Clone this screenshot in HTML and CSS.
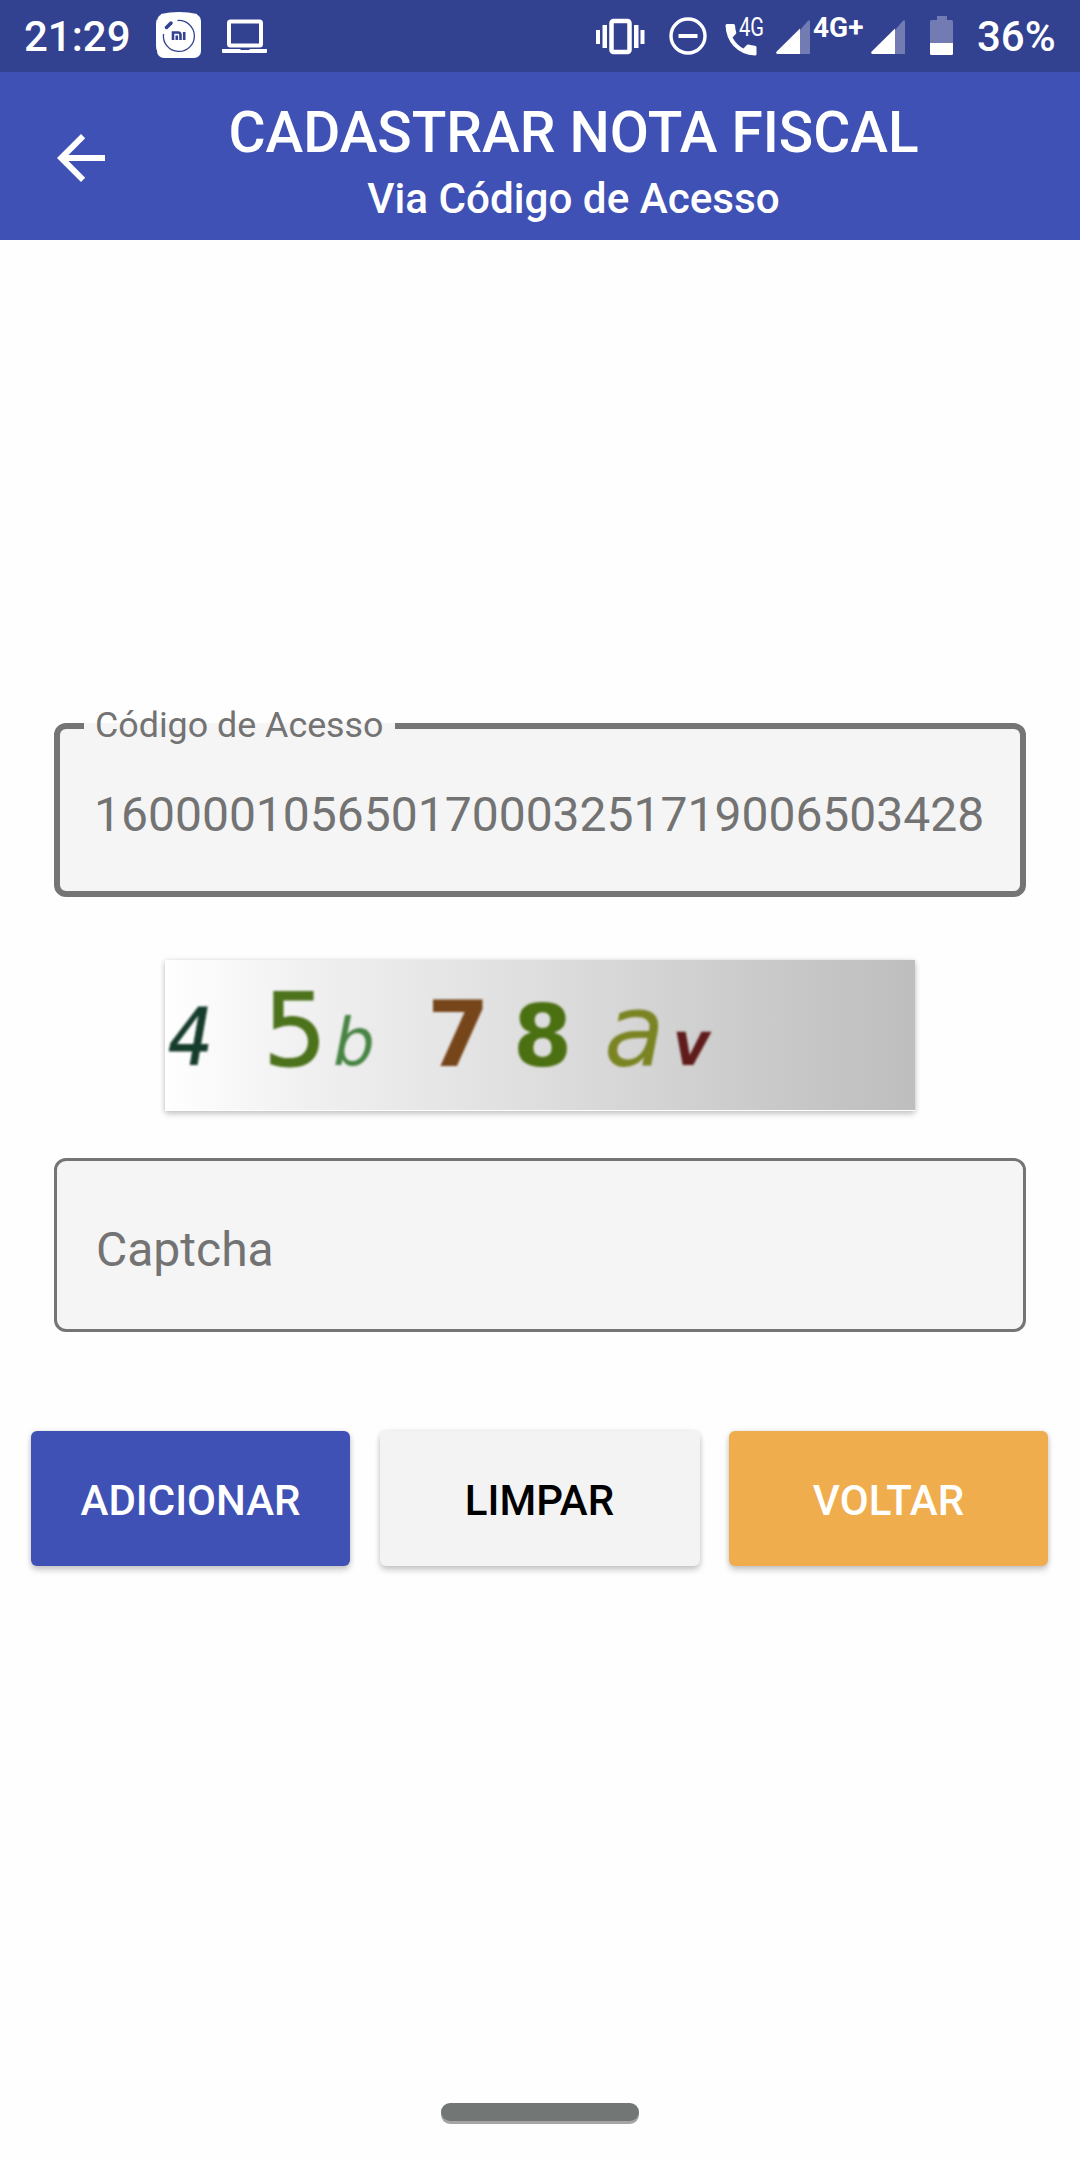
FILE: index.html
```html
<!DOCTYPE html>
<html lang="pt-BR">
<head>
<meta charset="utf-8">
<title>Cadastrar Nota Fiscal</title>
<link rel="stylesheet" href="styles.css">
</head>
<body>
<div class="status">
  <span class="clock">21:29</span>
  <svg class="ico-mi" width="46" height="48" viewBox="0 0 46 48">
    <rect x="1" y="2" width="44" height="44" rx="7" fill="#fff"/>
    <path d="M5 3Q23-1 41 3M1.500 8Q-.5 22 1.500 38" fill="none" stroke="#fff" stroke-width="2"/>
    <path d="M21.500 8.500A15.500 15.500 0 1 1 7.500 22" fill="none" stroke="#334191" stroke-width="1.300"/>
    <path d="M10.500 15.500L15 11" stroke="#334191" stroke-width="3.500" stroke-linecap="round"/>
    <path d="M17 28V20.500H22Q24.500 20.500 24.500 23V28M20.800 23.500V28M28.200 20V28" fill="none" stroke="#334191" stroke-width="2.600"/>
  </svg>
  <svg class="ico-laptop" width="46" height="36" viewBox="0 0 46 36">
    <rect x="7" y="2.500" width="32" height="24" rx="1.500" fill="none" stroke="#fff" stroke-width="4"/>
    <path d="M0 30H18.500V31H27.500V30H45V33Q45 34 44 34H1Q0 34 0 33Z" fill="#fff"/>
  </svg>
  <span class="spacer"></span>
  <svg class="ico-vibrate" width="50" height="38" viewBox="0 0 50 38">
    <path d="M0 12H4V26H0ZM6.500 7H11V30H6.500ZM38 7H42.500V30H38ZM44.500 12H48.500V26H44.500Z" fill="#fff"/>
    <rect x="15.500" y="3" width="18" height="31" rx="2" fill="none" stroke="#fff" stroke-width="4.500"/>
  </svg>
  <svg class="ico-dnd" width="38" height="38" viewBox="0 0 38 38">
    <circle cx="19" cy="19" r="17" fill="none" stroke="#fff" stroke-width="3.400"/>
    <path d="M9.500 19H28.500" stroke="#fff" stroke-width="4"/>
  </svg>
  <svg class="ico-call" width="40" height="40" viewBox="0 -2 40 40">
    <path d="M2 6H8.500Q10 6 10 7.500Q10.200 11.500 11.200 14.300Q11.500 15.300 10.800 16L7.500 19.500Q11.500 27 18.500 30.500L21.800 27Q22.500 26.200 23.500 26.600Q26.500 27.500 30 27.800Q31.500 27.800 31.500 29.300V36Q31.500 37.500 30 37.500Q17 37 8.500 28Q1 19.500 .5 7.500Q.5 6 2 6Z" fill="#fff"/>
    <text x="14" y="18" class="call-net" textLength="25" lengthAdjust="spacingAndGlyphs">4G</text>
  </svg>
  <svg class="ico-signal" width="34" height="34" viewBox="0 0 34 34">
    <path d="M24 10L32 .7Q34-.8 34 2V34H24Z" fill="#727cb3"/>
    <path d="M24 8.500V34H1.500Q-.8 33.500 .7 31.500Z" fill="#fff"/>
  </svg>
  <span class="net">4G+</span>
  <svg class="ico-signal" width="34" height="34" viewBox="0 0 34 34">
    <path d="M24 10L32 .7Q34-.8 34 2V34H24Z" fill="#727cb3"/>
    <path d="M24 8.500V34H1.500Q-.8 33.500 .7 31.500Z" fill="#fff"/>
  </svg>
  <svg class="ico-battery" width="23" height="39" viewBox="0 0 23 39">
    <path d="M7 0H17V4H21.500Q23 4 23 6V27H0V6Q0 4 1.500 4H7Z" fill="#727cb3"/>
    <path d="M0 27H23V37.500Q23 39 21.500 39H1.500Q0 39 0 37.500Z" fill="#fff"/>
  </svg>
  <span class="percent">36%</span>
</div>
<header class="toolbar">
  <svg class="back" width="48" height="48" viewBox="0 0 48 48">
    <path d="M48 21H11.500L28.200 4.200L24 0L0 24L24 48L28.200 43.800L11.500 27H48Z" fill="#fff"/>
  </svg>
  <div class="titles">
    <h1 class="title">CADASTRAR NOTA FISCAL</h1>
    <p class="subtitle">Via Código de Acesso</p>
  </div>
</header>
<main class="form">
  <div class="field field-active">
    <span class="label">Código de Acesso</span>
    <span class="value">160000105650170003251719006503428</span>
  </div>
  <div class="captcha">
    <svg width="750" height="150" viewBox="0 0 750 150">
      <g class="glyphs">
        <text x="3" y="105" font-size="79" font-style="italic" fill="#163c2c" stroke="#163c2c" stroke-width="1" textLength="45" lengthAdjust="spacingAndGlyphs">4</text>
        <text x="98" y="105.500" font-size="101" fill="#4c721c" stroke="#4c721c" stroke-width="1">5</text>
        <text x="168" y="105" font-size="66" font-style="italic" fill="#488444">b</text>
        <text x="262" y="105.500" font-size="90" font-weight="bold" fill="#77451a">7</text>
        <text x="348" y="106" font-size="85" font-weight="bold" fill="#4b7012">8</text>
        <text x="439" y="106" font-size="99" font-style="italic" fill="#7b8422">a</text>
        <text x="508" y="105" font-size="61" font-style="italic" font-weight="bold" fill="#601b1b" textLength="37" lengthAdjust="spacingAndGlyphs">v</text>
      </g>
    </svg>
  </div>
  <div class="field">
    <span class="value">Captcha</span>
  </div>
  <div class="actions">
    <button class="btn primary">ADICIONAR</button>
    <button class="btn plain">LIMPAR</button>
    <button class="btn warning">VOLTAR</button>
  </div>
</main>
<footer class="nav"><span class="pill"></span></footer>
</body>
</html>
```
FILE: styles.css
```css
* { box-sizing: border-box; }
body {
  margin: 0;
  width: 1080px;
  height: 2160px;
  display: flex;
  flex-direction: column;
  background: #fefefe;
  font-family: Roboto, sans-serif;
  overflow: hidden;
}
svg { display: block; flex: none; }

.status {
  height: 72px;
  flex: none;
  display: flex;
  align-items: flex-start;
  padding: 0 25px 0 24px;
  background: #334191;
  color: #fff;
}
.clock, .percent {
  font-size: 42px;
  font-weight: 500;
  line-height: 50px;
  padding-top: 12px;
}
.clock { width: 106px; }
.percent { width: 78px; margin-left: 24px; white-space: nowrap; }
.ico-mi { margin: 12px 0 0 26px; }
.ico-laptop { margin: 19px 0 0 20px; }
.spacer { flex: 1; }
.ico-vibrate { margin-top: 18px; }
.ico-dnd { margin: 17px 0 0 23px; }
.ico-call { margin: 16px 0 0 18px; overflow: visible; }
.ico-signal { margin: 20px 0 0 11px; }
.call-net { font: 25px Roboto, sans-serif; fill: #fff; }
.net {
  width: 52px;
  margin-left: 3px;
  padding-top: 12px;
  font-size: 28px;
  line-height: 32px;
  font-weight: 700;
  white-space: nowrap;
}
.net + .ico-signal { margin-left: 6px; }
.ico-battery { margin: 16px 0 0 25px; }

.toolbar {
  height: 168px;
  flex: none;
  display: flex;
  align-items: flex-start;
  padding-left: 57px;
  background: #3f51b5;
  color: #fff;
}
.back { margin-top: 62px; }
.titles { width: 937px; text-align: center; }
.title {
  margin: 28px 0 0;
  font-size: 56.8px;
  line-height: 66px;
  font-weight: 500;
}
.subtitle {
  margin: 8px 0 0;
  font-size: 42.2px;
  line-height: 50px;
  font-weight: 500;
}

.form { flex: 1; padding: 483px 31px 0; }
.field {
  height: 174px;
  margin: 0 23px;
  padding: 61px 0 0 39px;
  position: relative;
  border: 3px solid #757575;
  border-radius: 12px;
  background: #f5f5f5;
  color: #737373;
}
.field-active { border-width: 6px; padding: 58px 0 0 34px; }
.value { display: block; font-size: 48px; line-height: 56px; white-space: nowrap; }
.label {
  position: absolute;
  left: 24px;
  top: -8px;
  width: 311px;
  height: 42px;
  padding-left: 11px;
  background: linear-gradient(#fefefe 2px, #f5f5f5 2px);
  font-size: 35.8px;
  line-height: 9px;
  white-space: nowrap;
}

.captcha {
  width: 750px;
  height: 151px;
  margin: 63px auto 47px;
  border-bottom: 1px solid #fff;
  background: linear-gradient(90deg, #fff 0%, #f1f1f1 18%, #e5e5e5 38%, #d7d7d7 60%, #c9c9c9 81%, #bebebe 100%);
  box-shadow: 0 3px 6px rgba(0, 0, 0, .2), 0 0 5px rgba(0, 0, 0, .1);
}
.glyphs { font-family: "DejaVu Sans", sans-serif; filter: blur(1px); }

.actions {
  display: grid;
  grid-template-columns: 319px 320px 319px;
  justify-content: space-between;
  margin: 99px 1px 0 0;
}
.btn {
  height: 135px;
  padding: 5px 0 0;
  border: 0;
  border-radius: 6px;
  font: 500 42px/50px Roboto, sans-serif;
  color: #fff;
  box-shadow: 0 4px 6px rgba(0, 0, 0, .2), 0 0 5px rgba(0, 0, 0, .1);
}
.primary { background: #3f51b5; }
.plain { background: #f3f3f3; color: #000; }
.warning { background: #f0ad4e; }

.nav { height: 57px; flex: none; display: flex; justify-content: center; }
.pill {
  width: 198px;
  height: 18px;
  border-radius: 9px;
  background: #727776;
  box-shadow: 0 3px 0 #a5a5a5;
}
```
